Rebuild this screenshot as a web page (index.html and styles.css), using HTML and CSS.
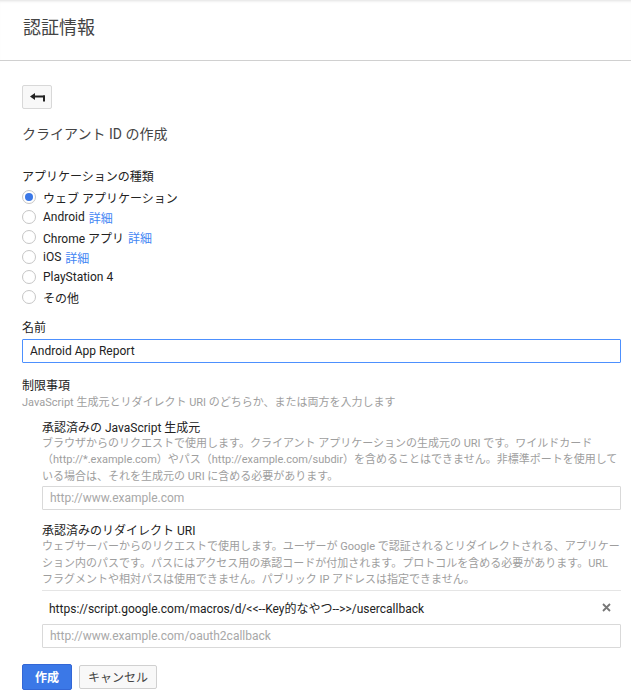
FILE: index.html
```html
<!DOCTYPE html>
<html lang="ja">
<head>
    <meta charset="UTF-8">
    <meta name="viewport" content="width=device-width, initial-scale=1.0">
    <title>認証情報</title>
    <link rel="stylesheet" href="styles.css">
</head>
<body>
    <header class="page-header">
        <h1>認証情報</h1>
    </header>

<div class="content">
    <button class="back-button" title="戻る">
        <svg width="15" height="9" viewBox="0 0 15 9">
            <path d="M0 3.5 L5 0 L5 7 Z" fill="#222"/>
            <rect x="4" y="2.5" width="11" height="2" fill="#222"/>
            <rect x="13" y="2.5" width="2" height="6" fill="#222"/>
        </svg>
    </button>

    <h2 class="form-title">クライアント ID の作成</h2>

    <div class="field-label type-label">アプリケーションの種類</div>
    <div class="radio-list">
        <label class="radio-row"><span class="radio checked"></span>ウェブ アプリケーション</label>
        <label class="radio-row"><span class="radio"></span>Android <a href="#">詳細</a></label>
        <label class="radio-row"><span class="radio"></span>Chrome アプリ <a href="#">詳細</a></label>
        <label class="radio-row"><span class="radio"></span>iOS <a href="#">詳細</a></label>
        <label class="radio-row"><span class="radio"></span>PlayStation 4</label>
        <label class="radio-row"><span class="radio"></span>その他</label>
    </div>

    <div class="field-label name-label">名前</div>
    <input class="text-input focused" type="text" value="Android App Report">

    <div class="section-title">制限事項</div>
    <div class="hint">JavaScript 生成元とリダイレクト URI のどちらか、または両方を入力します</div>

    <div class="sub-section">
        <div class="sub-title">承認済みの JavaScript 生成元</div>
        <p class="hint">ブラウザからのリクエストで使用します。クライアント アプリケーションの生成元の URI です。ワイルドカード（http://*.example.com）やパス（http://example.com/subdir）を含めることはできません。非標準ポートを使用している場合は、それを生成元の URI に含める必要があります。</p>
        <input class="text-input" type="text" placeholder="http://www.example.com">
    </div>

    <div class="sub-section redirect">
        <div class="sub-title">承認済みのリダイレクト URI</div>
        <p class="hint">ウェブサーバーからのリクエストで使用します。ユーザーが Google で認証されるとリダイレクトされる、アプリケーション内のパスです。パスにはアクセス用の承認コードが付加されます。プロトコルを含める必要があります。URL フラグメントや相対パスは使用できません。パブリック IP アドレスは指定できません。</p>
        <div class="uri-item">
            <span>https://script.google.com/macros/d/&lt;&lt;--Key的なやつ--&gt;&gt;/usercallback</span>
            <svg class="remove" width="9" height="9" viewBox="0 0 9 9">
                <path d="M1 1 L8 8 M8 1 L1 8" stroke="#777" stroke-width="1.8"/>
            </svg>
        </div>
        <input class="text-input" type="text" placeholder="http://www.example.com/oauth2callback">
    </div>

    <div class="actions">
        <button class="primary">作成</button>
        <button class="secondary">キャンセル</button>
    </div>
</div>

</body>
</html>
```

FILE: styles.css
```css
body {
    font-family: Roboto, "Noto Sans CJK JP", sans-serif;
    background-color: #ffffff;
    color: #222;
    margin: 0;
    padding: 0;
}
.page-header {
    height: 61px;
    box-sizing: border-box;
    padding: 17px 23px 0;
    border-bottom: 1px solid #d0d0d0;
    box-shadow: inset 0 3px 3px -2px rgba(0, 0, 0, 0.12);
}
.page-header h1 {
    margin: 0;
    font-size: 18px;
    line-height: 22px;
    font-weight: normal;
    color: #444;
}
.content {
    padding: 0 10px 0 22px;
}
.back-button {
    display: flex;
    align-items: center;
    justify-content: center;
    margin-top: 24px;
    width: 30px;
    height: 24px;
    padding: 0;
    background-color: #f8f8f8;
    border: 1px solid #d8d8d8;
    border-radius: 2px;
}
.form-title {
    margin: 15px 0 0;
    font-size: 14px;
    line-height: 20px;
    font-weight: normal;
    color: #444;
}
.field-label {
    font-size: 12px;
    line-height: 16px;
    color: #222;
}
.type-label {
    margin-top: 25px;
}
.radio-list {
    margin-top: 2px;
}
.radio-row {
    display: flex;
    align-items: center;
    height: 20px;
    font-size: 12px;
    color: #222;
}
.radio-row a {
    color: #4285f4;
    text-decoration: none;
    margin-left: 4px;
}
.radio {
    width: 12px;
    height: 12px;
    border: 1px solid #c6c6c6;
    border-radius: 50%;
    margin-right: 7px;
    display: flex;
    align-items: center;
    justify-content: center;
}
.radio.checked::after {
    content: "";
    width: 8px;
    height: 8px;
    border-radius: 50%;
    background-color: #3b78e7;
}
.name-label {
    margin-top: 13px;
}
.text-input {
    display: block;
    width: 100%;
    box-sizing: border-box;
    height: 24px;
    margin-top: 3px;
    padding: 0 7px;
    font-family: Roboto, "Noto Sans CJK JP", sans-serif;
    font-size: 12px;
    color: #222;
    border: 1px solid #d9d9d9;
    border-radius: 1px;
    outline: none;
}
.text-input.focused {
    border-color: #4d90fe;
}
.text-input::placeholder {
    color: #a8a8a8;
}
.section-title {
    margin-top: 14px;
    font-size: 12px;
    line-height: 18px;
    color: #222;
}
.hint {
    margin: 0;
    font-size: 11px;
    line-height: 16.5px;
    color: #9e9e9e;
}
.sub-section {
    margin-left: 20px;
    margin-top: 9px;
}
.sub-section.redirect {
    margin-top: 14px;
}
.sub-title {
    font-size: 12px;
    line-height: 15px;
    color: #222;
}
.sub-section .text-input {
    margin-top: 1px;
}
.uri-item {
    display: flex;
    align-items: center;
    justify-content: space-between;
    height: 33px;
    margin-top: 1px;
    padding: 0 10px 0 7px;
    border-top: 1px solid #e5e5e5;
    font-size: 12px;
    color: #222;
}
.redirect .uri-item + .text-input {
    margin-top: 0;
}
.actions {
    display: flex;
    align-items: center;
    gap: 7px;
    margin-top: 16px;
}
.actions button {
    font-family: Roboto, "Noto Sans CJK JP", sans-serif;
    font-size: 12px;
    border-radius: 2px;
    cursor: pointer;
}
.primary {
    height: 26px;
    width: 50px;
    background-color: #3b78e7;
    border: 1px solid #3367d6;
    color: white;
    font-weight: bold;
}
.secondary {
    height: 24px;
    padding: 0 8px;
    background-color: #f8f8f8;
    border: 1px solid #d0d0d0;
    color: #444;
}
```
